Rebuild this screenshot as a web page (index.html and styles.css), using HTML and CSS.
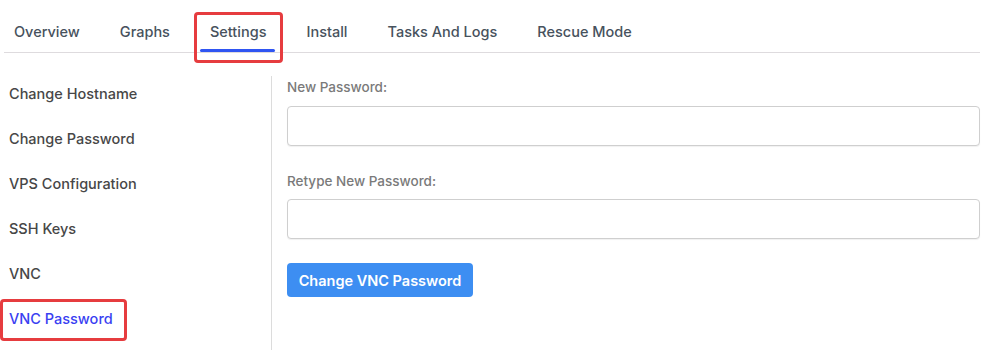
FILE: index.html
```html
<!DOCTYPE html>
<html>
<head>
<meta charset="utf-8">
<link rel="stylesheet" href="styles.css">
</head>
<body>
<div class="page">
  <nav class="tabs">
    <a class="tab">Overview</a>
    <a class="tab">Graphs</a>
    <a class="tab active highlight">Settings</a>
    <a class="tab">Install</a>
    <a class="tab">Tasks And Logs</a>
    <a class="tab">Rescue Mode</a>
  </nav>
  <div class="content">
    <aside class="sidebar">
      <a class="side-item">Change Hostname</a>
      <a class="side-item">Change Password</a>
      <a class="side-item">VPS Configuration</a>
      <a class="side-item">SSH Keys</a>
      <a class="side-item">VNC</a>
      <a class="side-item current highlight">VNC Password</a>
    </aside>
    <main class="form">
      <label class="label">New Password:</label>
      <input class="input" type="password">
      <label class="label second">Retype New Password:</label>
      <input class="input" type="password">
      <button class="btn">Change VNC Password</button>
    </main>
  </div>
</div>
</body>
</html>
```

FILE: styles.css
```css
* { box-sizing: border-box; }
html, body { margin: 0; padding: 0; background: #fff; }
body {
  font-family: "Inter", "Open Sans", "Liberation Sans", sans-serif;
  color: #444;
  width: 989px;
  height: 350px;
  overflow: hidden;
}
.page { padding: 0 9px 0 4px; }
.tabs {
  display: flex;
  height: 53px;
  border-bottom: 1px solid #dedbde;
  padding-left: 10px;
  gap: 40px;
}
.tab {
  position: relative;
  display: flex;
  align-items: center;
  height: 52px;
  padding-top: 10px;
  font-size: 14.5px;
  font-weight: 500;
  color: #47525d;
}
.tab.active::after {
  content: "";
  position: absolute;
  left: -10px;
  right: -9px;
  bottom: 0;
  height: 3px;
  border-radius: 2px;
  background: #2f55f2;
}
.tab.highlight::before {
  content: "";
  position: absolute;
  left: -16px;
  right: -17px;
  top: 12px;
  bottom: -11px;
  border: 3px solid #e63c3f;
  border-radius: 4px;
}
.content {
  display: flex;
  height: 297px;
  margin-left: -4px;
}
.sidebar {
  width: 272px;
  border-right: 1px solid #dcdcdc;
  margin-top: 23px;
  padding-top: 7px;
  display: flex;
  flex-direction: column;
  gap: 23px;
}
.side-item {
  position: relative;
  padding-left: 9px;
  font-size: 14.5px;
  font-weight: 500;
  color: #474747;
  height: 22px;
  line-height: 22px;
}
.side-item.current { color: #3a3ff2; }
.side-item.highlight::before {
  content: "";
  position: absolute;
  left: 0;
  top: -9px;
  width: 121px;
  height: 36px;
  border: 3px solid #e63c3f;
  border-radius: 4px;
}
.form {
  flex: 1;
  padding: 24px 0 0 15px;
  display: flex;
  flex-direction: column;
  align-items: flex-start;
}
.label {
  font-size: 13.5px;
  font-weight: 500;
  color: #7a7a7a;
  height: 20px;
  line-height: 20px;
}
.label.second { margin-top: 25px; }
.input {
  margin-top: 9px;
  width: 693px;
  height: 40px;
  border: 1px solid #cfcfcf;
  border-radius: 4px;
  box-shadow: 0 1px 1px rgba(0,0,0,0.06);
  background: #fff;
}
.label.second + .input { margin-top: 8px; }
.btn {
  margin-top: 24px;
  height: 34px;
  width: 186px;
  border: none;
  border-radius: 4px;
  background: #3d8ef2;
  color: #fff;
  font-family: inherit;
  font-size: 14.5px;
  font-weight: 600;
}
```
